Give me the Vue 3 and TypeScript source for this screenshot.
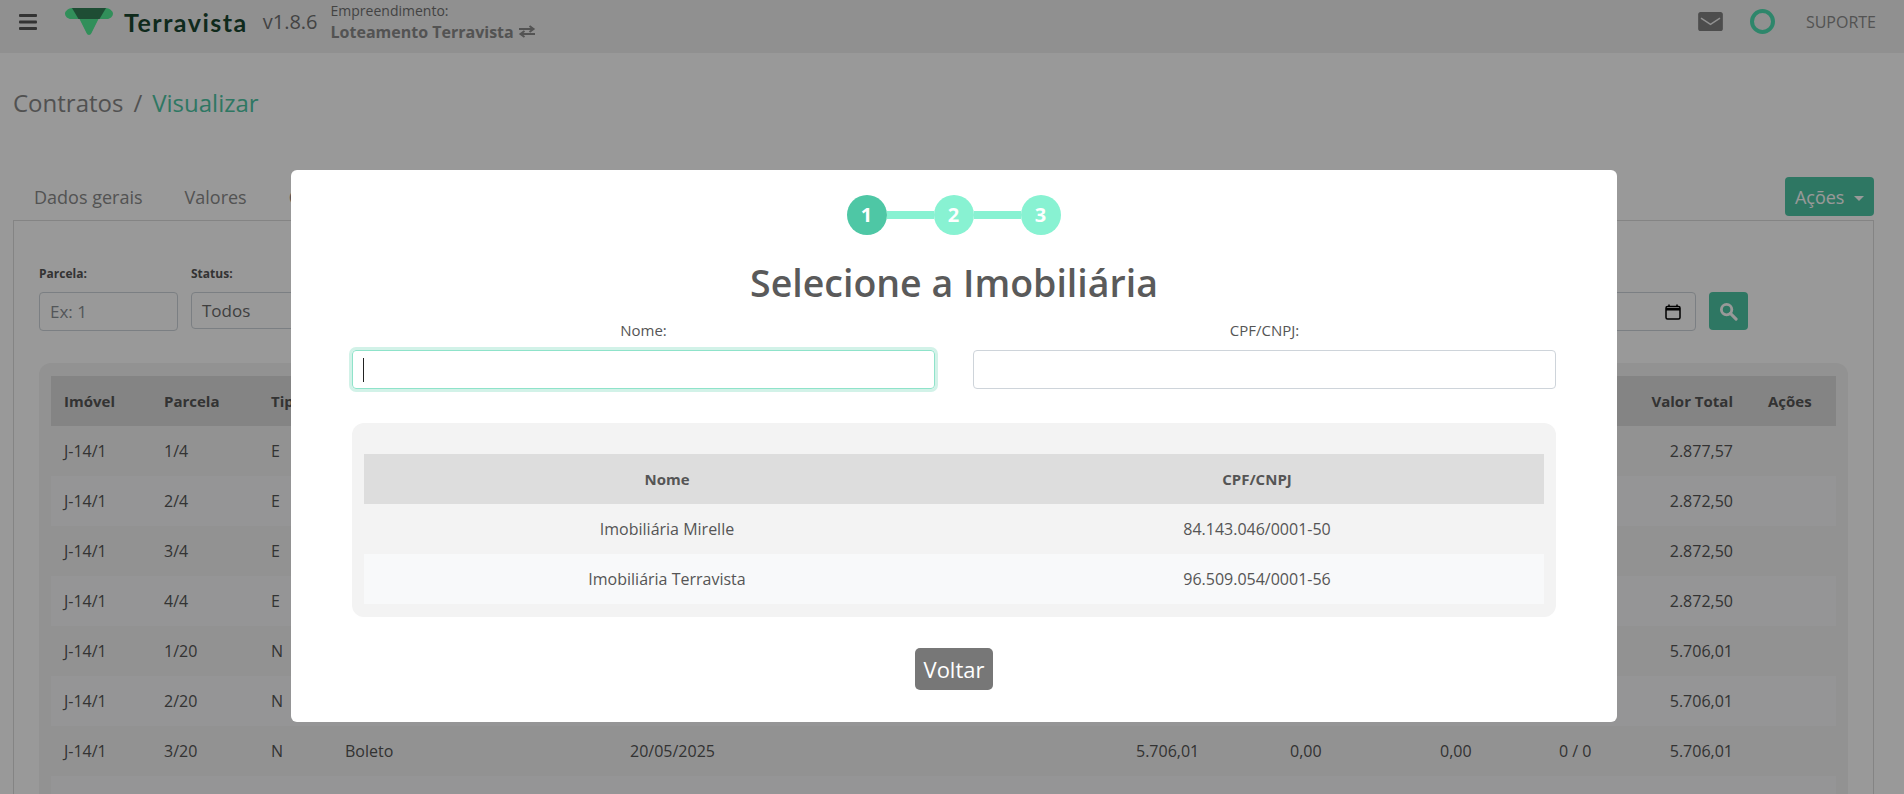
<template>
  <div class="page">
    <header class="topbar">
      <svg class="burger" viewBox="0 0 18 16" width="18" height="16">
        <rect x="0" y="0" width="18" height="3" rx="1" />
        <rect x="0" y="6.5" width="18" height="3" rx="1" />
        <rect x="0" y="13" width="18" height="3" rx="1" />
      </svg>
      <svg class="logo" viewBox="0 0 48 27" width="48" height="27">
        <path d="M7 0H41C44 0 48 3 48 5.500C48 8.500 45 11 42 11H33.500L26.500 25C25.500 27.500 22.500 27.500 21.500 25L14.500 11H6C3 11 0 8.500 0 5.500C0 3 4 0 7 0Z" fill="#53ee96" />
        <path d="M7 0H41L34.500 11H13.500Z" fill="#328058" />
      </svg>
      <span class="brand">Terravista</span>
      <span class="version">v1.8.6</span>
      <div class="project">
        <span class="project-label">Empreendimento:</span>
        <span class="project-name">Loteamento Terravista
          <svg viewBox="0 0 18 13" width="18" height="13" class="swap">
            <path d="M1 4H15M11.500 1L15.500 4L11.500 7M17 9H3M6.500 6L2.500 9L6.500 12" fill="none" stroke="currentColor" stroke-width="2" />
          </svg>
        </span>
      </div>
      <div class="top-right">
        <svg viewBox="0 0 26 20" width="25" height="19" class="mail">
          <path d="M2.500 0H23.500C25 0 26 1 26 2.500V17.500C26 19 25 20 23.500 20H2.500C1 20 0 19 0 17.500V2.500C0 1 1 0 2.500 0Z" fill="#808080" />
          <path d="M3 6.500L13 13L23 6.500" fill="none" stroke="#f0f0f0" stroke-width="1.600" />
        </svg>
        <span class="ring"></span>
        <span class="support">SUPORTE</span>
      </div>
    </header>

    <div class="crumbs">
      <span>Contratos</span>
      <span class="sep">/</span>
      <span class="current">Visualizar</span>
    </div>

    <div class="tabs-row">
      <span v-for="tab in tabs" :key="tab" class="tab">{{ tab }}</span>
      <button class="actions-btn">Ações <i class="caret"></i></button>
    </div>

    <section class="panel">
      <div class="filters">
        <div class="filter filter-parcela">
          <label>Parcela:</label>
          <input class="field" placeholder="Ex: 1" />
        </div>
        <div class="filter filter-status">
          <label>Status:</label>
          <div class="field select">Todos</div>
        </div>
        <div class="filter filter-date">
          <label>Até:</label>
          <div class="field date">
            <svg viewBox="0 0 16 16" width="16" height="16">
              <rect x="1" y="2.500" width="14" height="12.500" rx="1.500" fill="none" stroke="#000" stroke-width="1.500" />
              <path d="M1 4H15V6.500H1Z" fill="#000" />
              <path d="M4 0.500V3M12 0.500V3" stroke="#000" stroke-width="1.500" />
            </svg>
          </div>
        </div>
        <button class="search-btn">
          <svg viewBox="0 0 20 20" width="19" height="19">
            <circle cx="8" cy="8" r="5.500" fill="none" stroke="#fff" stroke-width="3" />
            <path d="M12 12L18 18" stroke="#fff" stroke-width="3.200" stroke-linecap="round" />
          </svg>
        </button>
      </div>

      <div class="table-box">
        <table class="bg-table">
          <colgroup>
            <col v-for="w in colWidths" :key="w.id" :style="{ width: w.px + 'px' }" />
          </colgroup>
          <thead>
            <tr>
              <th v-for="c in columns" :key="c" :class="{ total: c === 'Valor Total' }">{{ c }}</th>
            </tr>
          </thead>
          <tbody>
            <tr v-for="row in rows" :key="row.parcela">
              <td>J-14/1</td>
              <td>{{ row.parcela }}</td>
              <td>{{ row.tipo }}</td>
              <td>Boleto</td>
              <td>{{ row.venc }}</td>
              <td>{{ row.total }}</td>
              <td>0,00</td>
              <td>0,00</td>
              <td>0 / 0</td>
              <td class="total">{{ row.total }}</td>
              <td></td>
            </tr>
            <tr>
              <td colspan="11"></td>
            </tr>
          </tbody>
        </table>
      </div>
    </section>

    <div class="overlay">
      <div class="modal">
        <div class="stepper">
          <span class="step active">1</span>
          <span class="link"></span>
          <span class="step">2</span>
          <span class="link"></span>
          <span class="step">3</span>
        </div>
        <h2 class="modal-title">Selecione a Imobiliária</h2>
        <div class="modal-form">
          <div class="modal-field">
            <label>Nome:</label>
            <div class="modal-input focused"><span class="cursor"></span></div>
          </div>
          <div class="modal-field">
            <label>CPF/CNPJ:</label>
            <div class="modal-input"></div>
          </div>
        </div>
        <div class="result-box">
          <table class="result-table">
            <colgroup>
              <col class="col-name" />
              <col class="col-doc" />
            </colgroup>
            <thead>
              <tr><th>Nome</th><th>CPF/CNPJ</th></tr>
            </thead>
            <tbody>
              <tr v-for="item in agencies" :key="item.doc">
                <td>{{ item.name }}</td>
                <td>{{ item.doc }}</td>
              </tr>
            </tbody>
          </table>
        </div>
        <div class="modal-footer">
          <button class="back-btn">Voltar</button>
        </div>
      </div>
    </div>
  </div>
</template>

<script setup lang="ts">
interface Row {
  parcela: string;
  tipo: string;
  venc: string;
  total: string;
}

const tabs: string[] = ['Dados gerais', 'Valores', 'Cobrança'];

const columns: string[] = ['Imóvel', 'Parcela', 'Tipo', 'Forma', 'Vencimento', 'Valor', 'Juros', 'Multa', 'Dias', 'Valor Total', 'Ações'];

const colWidths = [100, 107, 74, 285, 506, 154, 150, 119, 92, 117, 81].map((px, id) => ({ id, px }));

const rows: Row[] = [
  { parcela: '1/4', tipo: 'E', venc: '20/02/2025', total: '2.877,57' },
  { parcela: '2/4', tipo: 'E', venc: '20/03/2025', total: '2.872,50' },
  { parcela: '3/4', tipo: 'E', venc: '20/04/2025', total: '2.872,50' },
  { parcela: '4/4', tipo: 'E', venc: '20/05/2025', total: '2.872,50' },
  { parcela: '1/20', tipo: 'N', venc: '20/03/2025', total: '5.706,01' },
  { parcela: '2/20', tipo: 'N', venc: '20/04/2025', total: '5.706,01' },
  { parcela: '3/20', tipo: 'N', venc: '20/05/2025', total: '5.706,01' },
];

const agencies = [
  { name: 'Imobiliária Mirelle', doc: '84.143.046/0001-50' },
  { name: 'Imobiliária Terravista', doc: '96.509.054/0001-56' },
];
</script>

<style>
html,
body {
  margin: 0;
  height: 794px;
  overflow: hidden;
  background: #fff;
}
</style>

<style scoped>
.page {
  font-family: "Open Sans", "Liberation Sans", sans-serif;
  color: #555;
  height: 794px;
  overflow: hidden;
}

.topbar {
  display: flex;
  align-items: center;
  height: 53px;
  background: #f0f0f0;
  padding: 0 28px 10px 19px;
  box-sizing: border-box;
}

.burger {
  fill: #555;
  margin-right: 28px;
}

.logo {
  margin-right: 11px;
}

.brand {
  font-family: Lato, sans-serif;
  font-weight: 700;
  font-size: 25px;
  letter-spacing: 1.5px;
  color: #1a4630;
  margin-right: 15px;
}

.version {
  font-size: 20px;
  color: #707070;
  margin-right: 13px;
}

.project {
  display: flex;
  flex-direction: column;
}

.project-label {
  font-size: 14px;
  line-height: 20px;
  color: #707070;
}

.project-name {
  font-size: 16px;
  line-height: 22px;
  font-weight: 700;
  color: #8a8a8a;
  display: flex;
  align-items: center;
  gap: 4px;
}

.top-right {
  margin-left: auto;
  display: flex;
  align-items: center;
}

.mail {
  margin-right: 27px;
}

.ring {
  width: 25px;
  height: 25px;
  border: 4px solid #4ee0b2;
  border-radius: 50%;
  box-sizing: border-box;
  margin-right: 31px;
}

.support {
  font-size: 16px;
  color: #8a8a8a;
}

.crumbs {
  display: flex;
  align-items: center;
  gap: 10px;
  padding: 33px 0 0 13px;
  font-size: 24px;
  line-height: 33px;
  height: 33px;
  color: #888;
}

.crumbs .current {
  color: #4ec7a5;
}

.tabs-row {
  display: flex;
  align-items: flex-end;
  margin: 61px 30px 0 13px;
  height: 40px;
}

.tab {
  font-size: 18px;
  line-height: 24px;
  color: #8a8a8a;
  padding: 0 21px;
  margin-bottom: 11px;
}

.actions-btn {
  margin-left: auto;
  width: 89px;
  height: 39px;
  margin-bottom: 4px;
  background: #4ec7a5;
  color: #fff;
  border: none;
  border-radius: 4px;
  font: inherit;
  font-size: 18px;
  padding: 0;
}

.caret {
  display: inline-block;
  width: 0;
  height: 0;
  border-left: 5px solid transparent;
  border-right: 5px solid transparent;
  border-top: 5px solid #fff;
  margin-left: 5px;
  vertical-align: 3px;
}

.panel {
  margin: 0 30px 0 13px;
  border: 1px solid #dcdcdc;
  border-bottom: none;
  padding: 45px 25px 0;
  height: 600px;
  box-sizing: border-box;
}

.filters {
  display: flex;
  align-items: flex-start;
}

.filter {
  display: flex;
  flex-direction: column;
}

.filter label {
  font-size: 12px;
  font-weight: 700;
  color: #555;
  line-height: 15px;
  margin-bottom: 11px;
}

.filter-parcela {
  width: 139px;
  margin-right: 13px;
}

.filter-status {
  width: 300px;
}

.filter-date {
  margin-left: auto;
  width: 300px;
  margin-right: 13px;
}

.field {
  height: 39px;
  width: 100%;
  border: 1px solid #ced4da;
  border-radius: 4px;
  box-sizing: border-box;
  padding: 0 10px;
  font: inherit;
  font-size: 17px;
  color: #6a6a6a;
  background: #fff;
  display: flex;
  align-items: center;
}

.field::placeholder {
  color: #8a8f94;
  opacity: 1;
}

.select {
  height: 37px;
}

.date {
  justify-content: flex-end;
  padding-right: 14px;
}

.search-btn {
  width: 39px;
  height: 38px;
  margin-top: 26px;
  background: #4ec7a5;
  border: none;
  border-radius: 4px;
  display: flex;
  align-items: center;
  justify-content: center;
  padding: 0;
  margin-right: 100px;
}

.table-box {
  margin: 32px 0 0;
  width: 1809px;
  background: #f3f3f3;
  border-radius: 12px;
  padding: 13px 12px;
  box-sizing: border-box;
}

.bg-table {
  border-collapse: collapse;
  table-layout: fixed;
  width: 1785px;
  font-size: 16px;
  color: #555;
}

.bg-table th {
  background: #ddd;
  height: 50px;
  padding: 0 13px;
  text-align: left;
  font-size: 15px;
  font-weight: 700;
  white-space: nowrap;
}

.bg-table td {
  height: 50px;
  padding: 0 13px;
  white-space: nowrap;
}

.bg-table tbody tr:nth-child(even) {
  background: #f8f9fa;
}

.bg-table .total {
  text-align: right;
  padding-right: 22px;
}

.overlay {
  position: fixed;
  inset: 0;
  background: rgba(0, 0, 0, 0.4);
  display: flex;
  justify-content: center;
  align-items: flex-start;
  padding: 170px 0 0 4px;
  box-sizing: border-box;
}

.modal {
  width: 1326px;
  height: 552px;
  background: #fff;
  border-radius: 6px;
  box-sizing: border-box;
  padding: 25px 61px 32px;
  display: flex;
  flex-direction: column;
}

.stepper {
  display: flex;
  align-items: center;
  justify-content: center;
  margin-right: 1px;
}

.step {
  width: 40px;
  height: 40px;
  border-radius: 50%;
  background: #88f2d2;
  color: #fff;
  font-size: 20px;
  font-weight: 700;
  line-height: 40px;
  text-align: center;
}

.step.active {
  background: #4ec7a5;
}

.link {
  width: 47px;
  height: 8px;
  background: #88f2d2;
}

.modal-title {
  margin: 22px 0 0;
  font-size: 37.5px;
  line-height: 52px;
  font-weight: 600;
  text-align: center;
  color: #5a5a5a;
}

.modal-form {
  display: flex;
  gap: 38px;
  margin-top: 11px;
}

.modal-field {
  flex: 1;
  text-align: center;
}

.modal-field label {
  display: block;
  font-size: 15px;
  line-height: 20px;
  margin-bottom: 10px;
}

.modal-input {
  height: 39px;
  border: 1px solid #ced4da;
  border-radius: 4px;
  box-sizing: border-box;
  display: flex;
  align-items: center;
  padding-left: 10px;
}

.modal-input.focused {
  border-color: #8fe3ca;
  box-shadow: 0 0 0 3px #d2f2e8;
}

.cursor {
  width: 1px;
  height: 24px;
  background: #222;
}

.result-box {
  margin-top: 34px;
  height: 194px;
  background: #f3f3f3;
  border-radius: 12px;
  padding: 31px 12px 12px;
  box-sizing: border-box;
}

.result-table {
  border-collapse: collapse;
  width: 100%;
  table-layout: fixed;
  font-size: 16px;
  color: #555;
  text-align: center;
}

.col-name {
  width: 606px;
}

.col-doc {
  width: 574px;
}

.result-table th {
  background: #ddd;
  height: 50px;
  padding: 0;
  font-size: 15px;
  font-weight: 700;
}

.result-table td {
  height: 50px;
  padding: 0;
}

.result-table tbody tr:nth-child(even) {
  background: #f8f9fa;
}

.modal-footer {
  display: flex;
  justify-content: center;
  margin-top: 31px;
}

.back-btn {
  width: 78px;
  height: 42px;
  background: #777;
  color: #fff;
  border: none;
  border-radius: 5px;
  font: inherit;
  font-size: 22px;
  padding: 0;
}
</style>
